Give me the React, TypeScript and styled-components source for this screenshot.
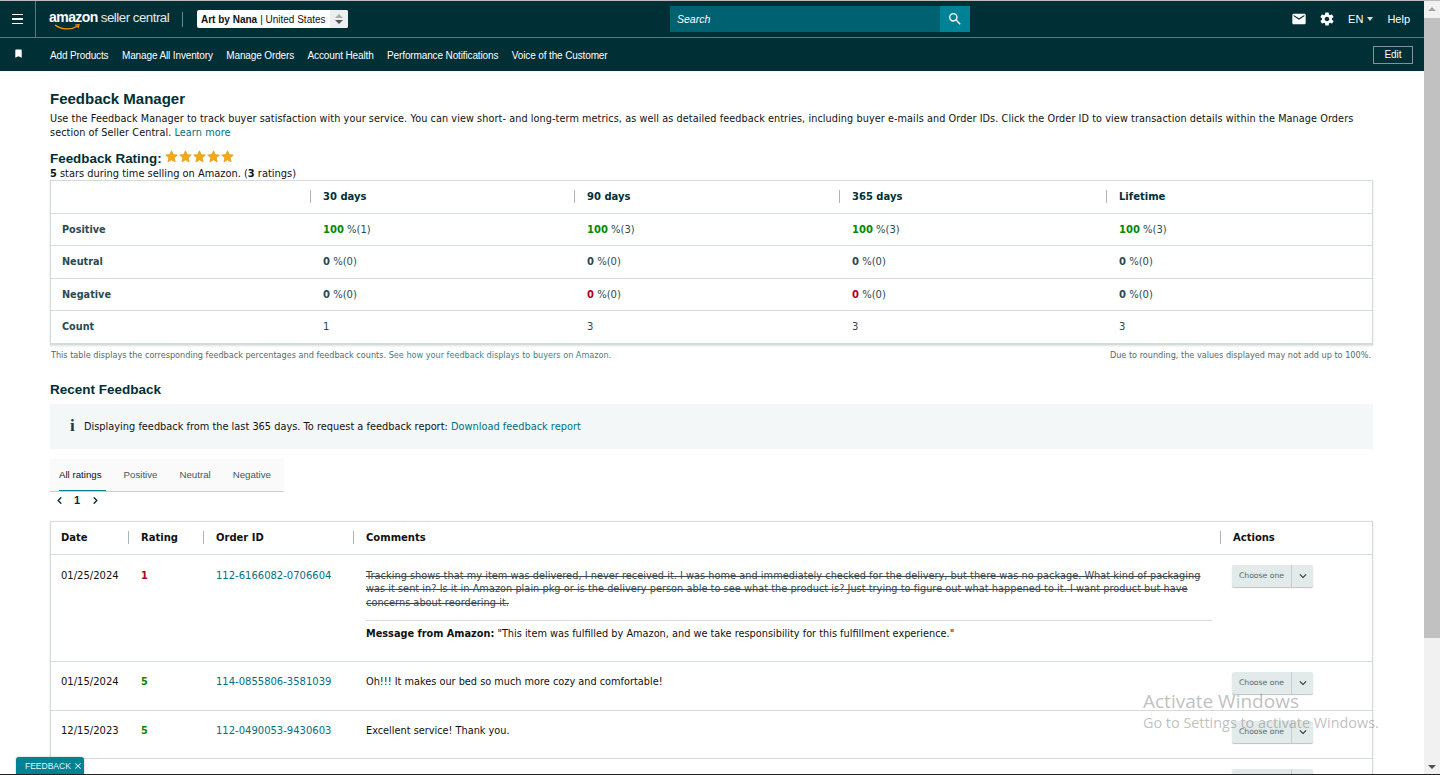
import React from 'react';
import styled, { createGlobalStyle } from 'styled-components';
import { MdEmail, MdSearch, MdBookmark, MdClose, MdKeyboardArrowDown } from 'react-icons/md';
import { IoMdSettings } from 'react-icons/io';
import { FiChevronLeft, FiChevronRight } from 'react-icons/fi';

const Global = createGlobalStyle`
  html, body { margin: 0; padding: 0; height: 100%; overflow: hidden; background: #fff; }
  * { box-sizing: border-box; }
`;

const Shell = styled.div`
  position: relative;
  display: flex;
  width: 1440px;
  height: 775px;
  overflow: hidden;
  font-family: "DejaVu Sans", Verdana, sans-serif;
  font-size: 10px;
  color: #002f36;
  border-top: 1px solid #bbb;
  border-bottom: 1px solid #222;
`;

const Page = styled.div`
  flex: 1;
  min-width: 0;
  overflow: hidden;
`;

const TopBar = styled.header`
  display: flex;
  align-items: center;
  height: 37px;
  background: #002f36;
  border-bottom: 1px solid #5a7a7e;
  position: relative;
`;

const MenuCell = styled.div`
  width: 36px;
  height: 36px;
  border-right: 1px solid #5a7a7e;
  display: flex;
  flex-direction: column;
  justify-content: center;
  gap: 3px;
  padding-left: 12px;
  span {
    display: block;
    width: 11px;
    height: 1.5px;
    background: #fff;
  }
`;

const Logo = styled.div`
  position: relative;
  display: flex;
  align-items: baseline;
  flex: none;
  margin-left: 13px;
  width: 133px;
  white-space: nowrap;
  color: #fff;
  font-family: "Liberation Sans", Arial, sans-serif;
  padding-bottom: 4px;
  svg { position: absolute; left: 5px; top: 15px; }
`;

const LogoBold = styled.span`
  font-size: 14px;
  font-weight: 700;
  letter-spacing: -0.55px;
  margin-right: 3px;
`;

const LogoThin = styled.span`
  font-size: 13.3px;
  letter-spacing: -0.5px;
  color: #e4eaea;
`;

const LogoRule = styled.div`
  width: 1px;
  height: 15px;
  background: #6a878a;
  margin: 0 14px 0 0;
`;

const AccountSelect = styled.div`
  width: 151px;
  height: 18px;
  background: #fff;
  border-radius: 2px;
  display: flex;
  align-items: center;
  padding-left: 4px;
  font-family: "Liberation Sans", Arial, sans-serif;
  font-size: 10px;
  color: #111;
  b { font-weight: 700; margin-right: 3px; }
`;

const Spinner = styled.div`
  margin-left: auto;
  width: 18px;
  height: 18px;
  background: #eeeeee;
  border-radius: 0 2px 2px 0;
  display: flex;
  flex-direction: column;
  align-items: center;
  justify-content: center;
  gap: 2px;
  i { display: block; width: 0; height: 0; border-left: 4px solid transparent; border-right: 4px solid transparent; }
  i:first-child { border-bottom: 4px solid #aaa; }
  i:last-child { border-top: 4px solid #555; }
`;

const SearchBox = styled.div`
  position: absolute;
  left: 670px;
  top: 5px;
  width: 300px;
  height: 26px;
  display: flex;
  background: #006170;
`;

const SearchLabel = styled.div`
  flex: 1;
  color: #fff;
  font-family: "Liberation Sans", Arial, sans-serif;
  font-style: italic;
  font-size: 10.5px;
  line-height: 27px;
  padding-left: 7px;
`;

const SearchButton = styled.div`
  width: 30px;
  background: #008296;
  color: #fff;
  display: flex;
  align-items: center;
  justify-content: center;
  font-size: 16px;
`;

const TopActions = styled.div`
  margin-left: auto;
  display: flex;
  align-items: center;
  color: #fff;
  font-family: "Liberation Sans", Arial, sans-serif;
  font-size: 11px;
  padding-right: 14px;
`;

const TopIcon = styled.span`
  display: flex;
  font-size: 16px;
  margin-right: ${(p: { $gap: number }) => p.$gap}px;
`;

const Lang = styled.span`
  display: flex;
  align-items: center;
  gap: 4px;
  margin-right: 14px;
  i { display: block; border-left: 3.5px solid transparent; border-right: 3.5px solid transparent; border-top: 4px solid #ddd; }
`;

const SubNav = styled.nav`
  display: flex;
  align-items: center;
  height: 33px;
  background: #002f36;
  color: #fff;
  font-family: "Liberation Sans", Arial, sans-serif;
  font-size: 10px;
  padding: 0 11px 0 13px;
`;

const Pin = styled.span`
  display: flex;
  width: 37px;
  font-size: 11px;
  margin-top: -3px;
`;

const NavLinks = styled.div`
  display: flex;
  gap: 13.5px;
  margin-top: 2px;
  letter-spacing: -0.13px;
`;

const EditButton = styled.div`
  margin-left: auto;
  width: 40px;
  height: 18px;
  border: 1px solid #7f9598;
  font-size: 10px;
  line-height: 16px;
  text-align: center;
`;

const Main = styled.main`
  padding: 20px 51px 0 50px;
`;

const H1 = styled.h1`
  margin: 0;
  font-family: "Liberation Sans", Arial, sans-serif;
  font-size: 15px;
  font-weight: 700;
  line-height: 16px;
`;

const Intro = styled.p`
  margin: 5px 0 0;
  font-size: 9.7px;
  line-height: 14px;
  letter-spacing: 0.08px;
  color: #111;
`;

const Link = styled.span`
  color: #00707f;
`;

const RatingTitle = styled.div`
  display: flex;
  align-items: center;
  gap: 3px;
  margin-top: 10px;
  height: 16px;
  font-family: "Liberation Sans", Arial, sans-serif;
  font-size: 13.4px;
  font-weight: 700;
`;

const Stars = styled.span`
  display: flex;
  gap: 1px;
  margin-top: -3px;
`;

const RatingNote = styled.div`
  font-size: 9.85px;
  line-height: 12px;
  margin-top: 2px;
  color: #111;
  b { font-weight: 700; }
`;

const Card = styled.div`
  margin-top: ${(p: { $top: number }) => p.$top}px;
  border: 1px solid #d5dbdb;
  border-bottom-width: 2px;
  box-shadow: 0 1px 2px rgba(0, 0, 0, 0.13);
`;

const StatsRow = styled.div`
  display: grid;
  grid-template-columns: 259px 264px 265px 267px 1fr;
  align-items: center;
  height: 32.5px;
  border-top: 1px solid #d5dbdb;
  &:first-child { border-top: 0; height: 31.5px; }
`;

const HeadCell = styled.div`
  font-weight: 700;
  font-size: 10px;
  padding-left: 12px;
  border-left: 1px solid #aab7b8;
  line-height: 13px;
  &:first-child { border-left: 0; padding-left: 11px; }
`;

const BodyCell = styled.div`
  font-size: ${(p: { $label?: boolean }) => (p.$label ? 9.7 : 10)}px;
  padding-left: ${(p: { $label?: boolean }) => (p.$label ? 11 : 13)}px;
  font-weight: ${(p: { $label?: boolean }) => (p.$label ? 700 : 400)};
  color: #2a4a50;
`;

const Val = styled.b`
  color: ${(p: { $c: string }) => p.$c};
`;

const TableNote = styled.div`
  display: flex;
  justify-content: space-between;
  margin-top: 4px;
  padding: 0 2px 0 1px;
  font-size: 8.15px;
  line-height: 12px;
  color: #56686b;
`;

const MutedLink = styled.span`
  color: #3d7f8c;
`;

const H2 = styled.h2`
  margin: 21px 0 0;
  font-family: "Liberation Sans", Arial, sans-serif;
  font-size: 13.5px;
  font-weight: 700;
  line-height: 16px;
`;

const InfoBox = styled.div`
  display: flex;
  align-items: center;
  height: 45px;
  margin-top: 6px;
  padding-left: 20px;
  background: #f3f7f8;
  font-size: 9.8px;
  color: #111;
`;

const InfoMark = styled.span`
  font-family: "Liberation Serif", serif;
  font-size: 17px;
  font-weight: 700;
  width: 14px;
  color: #22393d;
`;

const Tabs = styled.div`
  display: flex;
  width: 234px;
  height: 33px;
  margin-top: 10px;
  padding-left: 9px;
  gap: 22px;
  background: #fafafa;
  border-bottom: 1px solid #c9cfcf;
  font-family: "Liberation Sans", Arial, sans-serif;
  font-size: 9.7px;
`;

const Tab = styled.div`
  height: 32px;
  line-height: 32px;
  padding-right: ${(p: { $on?: boolean }) => (p.$on ? 4 : 0)}px;
  margin-right: ${(p: { $on?: boolean }) => (p.$on ? -4 : 0)}px;
  color: ${(p: { $on?: boolean }) => (p.$on ? '#0f1111' : '#44595c')};
  border-bottom: ${(p: { $on?: boolean }) => (p.$on ? '1px solid #008296' : '0')};
`;

const Pager = styled.div`
  display: flex;
  align-items: center;
  height: 15px;
  margin-top: 1px;
  padding-left: 3.5px;
  font-family: "Liberation Sans", Arial, sans-serif;
  font-size: 11px;
  font-weight: 700;
  gap: 9.5px;
  svg { stroke-width: 3; }
`;

const FeedbackRow = styled.div`
  display: grid;
  grid-template-columns: 77px 75px 150px 867px 1fr;
  height: ${(p: { $h: number }) => p.$h}px;
  border-top: 1px solid #d5dbdb;
  padding-top: 13px;
  font-size: 9.75px;
  line-height: 13.5px;
  color: #111;
  & > div:not(:last-child) { margin-top: ${(p: { $h: number }) => (p.$h > 100 ? 1 : 0)}px; }
  &:first-child { border-top: 0; padding-top: 0; align-items: center; }
`;

const Cell = styled.div`
  padding-left: 10px;
  & + & { padding-left: 13px; }
`;

const Mono = styled.span`
  font-size: 10px;
`;

const Th = styled.div`
  align-self: center;
  padding-left: 10px;
  font-size: 10px;
  font-weight: 700;
  line-height: 13px;
  & + & { padding-left: 12px; border-left: 1px solid #aab7b8; }
`;

const Struck = styled.div`
  text-decoration: line-through;
  color: #3d4a4d;
  letter-spacing: 0.035px;
  padding-right: 8px;
`;

const Notice = styled.div`
  margin: 11px 8px 0 0;
  padding-top: 6px;
  border-top: 1px solid #d5dbdb;
  b { font-weight: 700; }
`;

const ChooseOne = styled.div`
  display: flex;
  width: 81px;
  height: 22px;
  margin: -3px 0 0 -1px;
  background: #e3eaea;
  border-radius: 2px;
  box-shadow: 0 1px 1px rgba(0, 0, 0, 0.25);
  color: #56686b;
  font-size: 7.7px;
  line-height: 22px;
`;

const ChooseLabel = styled.span`
  width: 60px;
  text-align: center;
  border-right: 1px solid #c5cfcf;
`;

const ChooseArrow = styled.span`
  flex: 1;
  display: flex;
  align-items: center;
  justify-content: center;
  color: #22393d;
  font-size: 14px;
`;

const Scrollbar = styled.aside`
  width: 16px;
  background: #f1f1f1;
  display: flex;
  flex-direction: column;
  align-items: center;
`;

const ScrollArrow = styled.i`
  display: block;
  margin: 6px 0 5px;
  border-left: 4px solid transparent;
  border-right: 4px solid transparent;
  ${(p: { $up?: boolean }) =>
    p.$up ? 'border-bottom: 4px solid #a3a3a3;' : 'border-top: 4px solid #505050; margin-top: auto;'}
`;

const ScrollThumb = styled.div`
  width: 100%;
  height: 620px;
  background: #c1c1c1;
  margin-top: 2px;
`;

const FeedbackTab = styled.div`
  position: absolute;
  left: 16px;
  bottom: 0;
  display: flex;
  align-items: center;
  gap: 2px;
  width: 68px;
  height: 17px;
  padding-left: 9px;
  background: #008296;
  border-radius: 3px 3px 0 0;
  box-shadow: 0 0 2px rgba(0, 0, 0, 0.3);
  color: #e8f5f6;
  font-family: "Liberation Sans", Arial, sans-serif;
  font-size: 8.5px;
  svg { font-size: 10px; }
`;

const Watermark = styled.div`
  position: absolute;
  left: 1143px;
  top: 688px;
  font-family: "Open Sans", sans-serif;
  color: rgba(90, 90, 90, 0.4);
  pointer-events: none;
  white-space: nowrap;
`;

const WatermarkTitle = styled.div`
  font-size: 19px;
  line-height: 24px;
`;

const WatermarkSub = styled.div`
  font-size: 14.4px;
  line-height: 20px;
`;

const Star = () => (
  <svg width="13" height="13" viewBox="0 0 24 24">
    <path
      d="M12 1.5l3.2 7 7.6.8-5.7 5.1 1.6 7.6L12 18.2 5.3 22l1.6-7.6L1.2 9.300l7.6-.8z"
      fill="#f5a90f"
      stroke="#d98a00"
      strokeWidth="1"
    />
  </svg>
);

const statRows = [
  { label: 'Positive', color: '#008a00', values: ['100', '100', '100', '100'], counts: [1, 3, 3, 3] },
  { label: 'Neutral', color: '#2a4a50', values: ['0', '0', '0', '0'], counts: [0, 0, 0, 0] },
  { label: 'Negative', color: '#2a4a50', values: ['0', '0', '0', '0'], counts: [0, 0, 0, 0] },
];

const Choose = () => (
  <ChooseOne>
    <ChooseLabel>Choose one</ChooseLabel>
    <ChooseArrow>
      <MdKeyboardArrowDown />
    </ChooseArrow>
  </ChooseOne>
);

export default function App() {
  return (
    <Shell>
      <Global />
      <Page>
        <TopBar>
          <MenuCell>
            <span />
            <span />
            <span />
          </MenuCell>
          <Logo>
            <LogoBold>amazon</LogoBold>
            <LogoThin>seller central</LogoThin>
            <svg width="28" height="8" viewBox="0 0 28 8">
              <path d="M1 1c7 5 16 5 23 1" fill="none" stroke="#f90" strokeWidth="1.4" />
              <path d="M21 1l4-.4-1 3.400" fill="none" stroke="#f90" strokeWidth="1.1" />
            </svg>
          </Logo>
          <LogoRule />
          <AccountSelect>
            <b>Art by Nana</b> | United States
            <Spinner>
              <i />
              <i />
            </Spinner>
          </AccountSelect>
          <SearchBox>
            <SearchLabel>Search</SearchLabel>
            <SearchButton>
              <MdSearch />
            </SearchButton>
          </SearchBox>
          <TopActions>
            <TopIcon $gap={12}>
              <MdEmail />
            </TopIcon>
            <TopIcon $gap={13}>
              <IoMdSettings />
            </TopIcon>
            <Lang>
              EN <i />
            </Lang>
            Help
          </TopActions>
        </TopBar>
        <SubNav>
          <Pin>
            <MdBookmark />
          </Pin>
          <NavLinks>
            <span>Add Products</span>
            <span>Manage All Inventory</span>
            <span>Manage Orders</span>
            <span>Account Health</span>
            <span>Performance Notifications</span>
            <span>Voice of the Customer</span>
          </NavLinks>
          <EditButton>Edit</EditButton>
        </SubNav>
        <Main>
          <H1>Feedback Manager</H1>
          <Intro>
            Use the Feedback Manager to track buyer satisfaction with your service. You can view short- and long-term
            metrics, as well as detailed feedback entries, including buyer e-mails and Order IDs. Click the Order ID to
            view transaction details within the Manage Orders section of Seller Central. <Link>Learn more</Link>
          </Intro>
          <RatingTitle>
            Feedback Rating:
            <Stars>
              <Star />
              <Star />
              <Star />
              <Star />
              <Star />
            </Stars>
          </RatingTitle>
          <RatingNote>
            <b>5</b> stars during time selling on Amazon. (<b>3</b> ratings)
          </RatingNote>
          <Card $top={0}>
            <StatsRow>
              <HeadCell />
              <HeadCell>30 days</HeadCell>
              <HeadCell>90 days</HeadCell>
              <HeadCell>365 days</HeadCell>
              <HeadCell>Lifetime</HeadCell>
            </StatsRow>
            {statRows.map((row) => (
              <StatsRow key={row.label}>
                <BodyCell $label>{row.label}</BodyCell>
                {row.values.map((v, i) => (
                  <BodyCell key={i}>
                    <Val $c={row.label === 'Negative' && (i === 1 || i === 2) ? '#b0001e' : row.color}>{v}</Val> %(
                    {row.counts[i]})
                  </BodyCell>
                ))}
              </StatsRow>
            ))}
            <StatsRow>
              <BodyCell $label>Count</BodyCell>
              <BodyCell>1</BodyCell>
              <BodyCell>3</BodyCell>
              <BodyCell>3</BodyCell>
              <BodyCell>3</BodyCell>
            </StatsRow>
          </Card>
          <TableNote>
            <span>
              This table displays the corresponding feedback percentages and feedback counts.{' '}
              <MutedLink>See how your feedback displays to buyers on Amazon.</MutedLink>
            </span>
            <span>Due to rounding, the values displayed may not add up to 100%.</span>
          </TableNote>
          <H2>Recent Feedback</H2>
          <InfoBox>
            <InfoMark>i</InfoMark>
            Displaying feedback from the last 365 days. To request a feedback report:&nbsp;
            <Link>Download feedback report</Link>
          </InfoBox>
          <Tabs>
            <Tab $on>All ratings</Tab>
            <Tab>Positive</Tab>
            <Tab>Neutral</Tab>
            <Tab>Negative</Tab>
          </Tabs>
          <Pager>
            <FiChevronLeft />
            1
            <FiChevronRight />
          </Pager>
          <Card $top={13}>
            <FeedbackRow $h={32}>
              <Th>Date</Th>
              <Th>Rating</Th>
              <Th>Order ID</Th>
              <Th>Comments</Th>
              <Th>Actions</Th>
            </FeedbackRow>
            <FeedbackRow $h={107}>
              <Cell>
                <Mono>01/25/2024</Mono>
              </Cell>
              <Cell>
                <Val $c="#b0001e">1</Val>
              </Cell>
              <Cell>
                <Link>
                  <Mono>112-6166082-0706604</Mono>
                </Link>
              </Cell>
              <Cell>
                <Struck>
                  Tracking shows that my item was delivered, I never received it. I was home and immediately checked for
                  the delivery, but there was no package. What kind of packaging was it sent in? Is it in Amazon plain
                  pkg or is the delivery person able to see what the product is? Just trying to figure out what happened
                  to it. I want product but have concerns about reordering it.
                </Struck>
                <Notice>
                  <b>Message from Amazon:</b> "This item was fulfilled by Amazon, and we take responsibility for this
                  fulfillment experience."
                </Notice>
              </Cell>
              <Cell>
                <Choose />
              </Cell>
            </FeedbackRow>
            <FeedbackRow $h={49}>
              <Cell>
                <Mono>01/15/2024</Mono>
              </Cell>
              <Cell>
                <Val $c="#008a00">5</Val>
              </Cell>
              <Cell>
                <Link>
                  <Mono>114-0855806-3581039</Mono>
                </Link>
              </Cell>
              <Cell>Oh!!! It makes our bed so much more cozy and comfortable!</Cell>
              <Cell>
                <Choose />
              </Cell>
            </FeedbackRow>
            <FeedbackRow $h={48}>
              <Cell>
                <Mono>12/15/2023</Mono>
              </Cell>
              <Cell>
                <Val $c="#008a00">5</Val>
              </Cell>
              <Cell>
                <Link>
                  <Mono>112-0490053-9430603</Mono>
                </Link>
              </Cell>
              <Cell>Excellent service! Thank you.</Cell>
              <Cell>
                <Choose />
              </Cell>
            </FeedbackRow>
            <FeedbackRow $h={48}>
              <Cell />
              <Cell />
              <Cell />
              <Cell />
              <Cell>
                <Choose />
              </Cell>
            </FeedbackRow>
          </Card>
        </Main>
      </Page>
      <Scrollbar>
        <ScrollArrow $up />
        <ScrollThumb />
        <ScrollArrow />
      </Scrollbar>
      <FeedbackTab>
        FEEDBACK
        <MdClose />
      </FeedbackTab>
      <Watermark>
        <WatermarkTitle>Activate Windows</WatermarkTitle>
        <WatermarkSub>Go to Settings to activate Windows.</WatermarkSub>
      </Watermark>
    </Shell>
  );
}
